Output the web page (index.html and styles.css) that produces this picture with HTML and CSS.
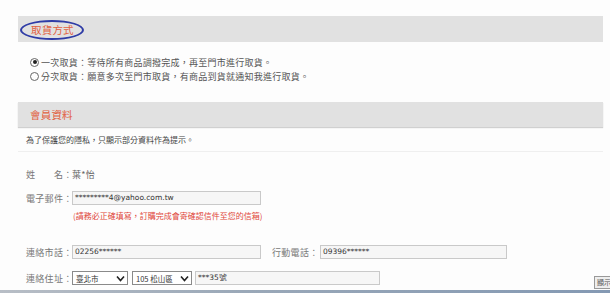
FILE: index.html
```html
<!DOCTYPE html>
<html lang="zh-Hant">
<head>
    <meta charset="UTF-8">
    <title>取貨方式</title>
    <link rel="stylesheet" href="styles.css">
</head>
<body>
    <div class="page">
        <div class="bar">
            <span class="bar-title">取貨方式</span>
            <span class="circle-mark"></span>
        </div>
        <div class="pickup">
            <label class="radio-row"><span class="radio checked"></span>一次取貨：等待所有商品調撥完成，再至門市進行取貨。</label>
            <label class="radio-row"><span class="radio"></span>分次取貨：願意多次至門市取貨，有商品到貨就通知我進行取貨。</label>
        </div>

        <div class="bar bar-member">
            <span class="bar-title">會員資料</span>
        </div>
        <div class="privacy">為了保護您的隱私，只顯示部分資料作為提示。</div>

        <div class="form">
            <div class="row row-name">
                <span class="label">姓&emsp;&emsp;名：</span>
                <span class="value">葉*怡</span>
            </div>
            <div class="row row-email">
                <span class="label">電子郵件：</span>
                <span class="field field-wide">*********4@yahoo.com.tw</span>
            </div>
            <div class="note">(請務必正確填寫，訂購完成會寄確認信件至您的信箱)</div>
            <div class="row row-phone">
                <span class="label">連絡市話：</span>
                <span class="field field-wide">02256******</span>
                <span class="label label-mobile">行動電話：</span>
                <span class="field field-mobile">09396******</span>
            </div>
            <div class="row row-addr">
                <span class="label">連絡住址：</span>
                <span class="select select-city">臺北市<svg width="9" height="7" viewBox="0 0 9 7"><path d="M1 1.5 L4.5 5.5 L8 1.5" fill="none" stroke="#222" stroke-width="1.6"/></svg></span>
                <span class="select select-area">105 松山區<svg width="9" height="7" viewBox="0 0 9 7"><path d="M1 1.5 L4.5 5.5 L8 1.5" fill="none" stroke="#222" stroke-width="1.6"/></svg></span>
                <span class="field field-addr">***35號</span>
            </div>
        </div>
    </div>

    <div class="show-btn">顯示</div>
    <div class="taskbar"></div>
</body>
</html>
```

FILE: styles.css
```css
body {
    margin: 0;
    background: #fdfdfd;
    font-family: "Noto Sans CJK TC", "Noto Sans", sans-serif;
    color: #666;
    height: 293px;
    overflow: hidden;
}
.page {
    padding: 16px 7px 0 18px;
}
.bar {
    position: relative;
    height: 26px;
    background: #e1e1e1;
    display: flex;
    align-items: center;
    padding-left: 13px;
}
.bar-member {
    height: 25px;
    margin-top: 19px;
    padding-left: 12px;
    box-shadow: 0 1px 1px #d0d0d0;
}
.bar-title {
    color: #e2603f;
    font-size: 10.5px;
    letter-spacing: 0.2px;
}
.circle-mark {
    position: absolute;
    left: 2px;
    top: 4px;
    width: 60px;
    height: 16px;
    border: 2px solid #2f3ca6;
    border-radius: 50%;
}
.pickup {
    margin-top: 13px;
    padding-left: 12px;
}
.radio-row {
    display: flex;
    align-items: center;
    height: 14px;
    font-size: 9px;
    letter-spacing: 0.25px;
    color: #555;
}
.radio {
    width: 7px;
    height: 7px;
    border: 1px solid #666;
    border-radius: 50%;
    margin-right: 2px;
    display: flex;
    align-items: center;
    justify-content: center;
}
.radio.checked::after {
    content: "";
    width: 4px;
    height: 4px;
    border-radius: 50%;
    background: #222;
}
.privacy {
    margin-top: 6px;
    padding: 0 0 4px 8px;
    height: 14px;
    line-height: 14px;
    font-size: 8px;
    color: #444;
    border-bottom: 1px solid #efefef;
}
.form {
    padding-left: 8px;
}
.row {
    display: flex;
    align-items: center;
    height: 14px;
    font-size: 9px;
    letter-spacing: 0.3px;
}
.row-name {
    margin-top: 15px;
}
.row-email {
    margin-top: 10px;
}
.row-phone {
    margin-top: 22px;
}
.row-addr {
    margin-top: 12px;
}
.label {
    width: 46px;
    color: #777;
    white-space: nowrap;
}
.label-mobile {
    margin-left: 11px;
    width: 48px;
}
.value {
    color: #666;
}
.field {
    box-sizing: border-box;
    height: 14px;
    border: 1px solid #c9c9c9;
    background: #f6f6f6;
    font-family: "DejaVu Sans", sans-serif;
    font-size: 7.5px;
    letter-spacing: 0;
    color: #333;
    padding-left: 2px;
    line-height: 12px;
}
.field-wide {
    width: 189px;
}
.field-mobile {
    width: 187px;
}
.field-addr {
    width: 185px;
    margin-left: 3px;
}
.select {
    box-sizing: border-box;
    height: 14px;
    border: 1px solid #8a8a8a;
    background: #fff;
    display: flex;
    align-items: center;
    justify-content: space-between;
    padding: 0 2px 0 3px;
    font-size: 7.5px;
    letter-spacing: 0;
    color: #333;
}
.select-city {
    width: 56px;
}
.select-area {
    width: 60px;
    margin-left: 4px;
}
.note {
    margin: 4px 0 0 47px;
    height: 14px;
    line-height: 14px;
    font-size: 8px;
    color: #e0463a;
}
.show-btn {
    position: fixed;
    right: -4px;
    bottom: 4px;
    height: 11px;
    padding: 0 2px;
    border: 1px solid #999;
    background: #eee;
    font-size: 7px;
    line-height: 11px;
    color: #555;
}
.taskbar {
    position: fixed;
    left: 0;
    right: 0;
    bottom: 0;
    height: 3px;
    background: linear-gradient(to right, #b8bec6, #9aa8b8 40%, #8499b3);
}
```
